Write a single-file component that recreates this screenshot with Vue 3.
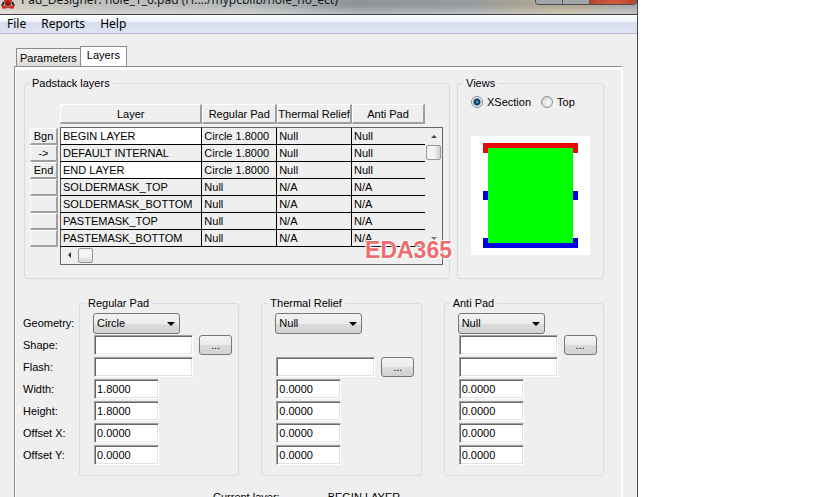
<script setup>
import { ref, reactive } from 'vue'

const columns = ['Layer', 'Regular Pad', 'Thermal Relief', 'Anti Pad']
const layers = [
  { key: 'Bgn', editable: true, cells: ['BEGIN LAYER', 'Circle 1.8000', 'Null', 'Null'] },
  { key: '->', editable: false, cells: ['DEFAULT INTERNAL', 'Circle 1.8000', 'Null', 'Null'] },
  { key: 'End', editable: true, cells: ['END LAYER', 'Circle 1.8000', 'Null', 'Null'] },
  { key: '', editable: false, cells: ['SOLDERMASK_TOP', 'Null', 'N/A', 'N/A'] },
  { key: '', editable: false, cells: ['SOLDERMASK_BOTTOM', 'Null', 'N/A', 'N/A'] },
  { key: '', editable: false, cells: ['PASTEMASK_TOP', 'Null', 'N/A', 'N/A'] },
  { key: '', editable: false, cells: ['PASTEMASK_BOTTOM', 'Null', 'N/A', 'N/A'] }
]

const view = ref('xsection')

const numeric = [
  { id: 'width', label: 'Width:' },
  { id: 'height', label: 'Height:' },
  { id: 'ox', label: 'Offset X:' },
  { id: 'oy', label: 'Offset Y:' }
]

const pads = reactive([
  { id: 'reg', title: 'Regular Pad', geometry: 'Circle', hasShape: true, browse: 'shape', shape: '', flash: '', width: '1.8000', height: '1.8000', ox: '0.0000', oy: '0.0000' },
  { id: 'thermal', title: 'Thermal Relief', geometry: 'Null', hasShape: false, browse: 'flash', shape: '', flash: '', width: '0.0000', height: '0.0000', ox: '0.0000', oy: '0.0000' },
  { id: 'anti', title: 'Anti Pad', geometry: 'Null', hasShape: true, browse: 'shape', shape: '', flash: '', width: '0.0000', height: '0.0000', ox: '0.0000', oy: '0.0000' }
])
</script>

<template>
  <div class="desktop">
    <main class="window">
      <header class="titlebar">
        <svg class="app-icon" width="16" height="16" viewBox="0 0 16 16" aria-hidden="true">
          <path d="M4 9 L2 13 M12 9 L14 13" stroke="#222" stroke-width="2" />
          <ellipse cx="8" cy="7" rx="4" ry="6" fill="#d42a22" />
          <path d="M2 14 H7 M9 14 H14" stroke="#d42a22" stroke-width="3" />
          <path d="M8 8 V15 M5 11 H11" stroke="#3b1512" stroke-width="1" />
        </svg>
        <span class="title">Pad_Designer: hole_1_6.pad (H:.../mypcblib/hole_no_ect)</span>
        <div class="caption">
          <button type="button" class="cap" aria-label="Minimize"></button>
          <button type="button" class="cap" aria-label="Maximize"></button>
          <button type="button" class="cap close" aria-label="Close"></button>
        </div>
      </header>

      <nav class="menubar">
        <button type="button">File</button>
        <button type="button">Reports</button>
        <button type="button">Help</button>
      </nav>

      <div class="tabs" role="tablist">
        <button type="button" role="tab" class="tab" aria-selected="false">Parameters</button>
        <button type="button" role="tab" class="tab active" aria-selected="true">Layers</button>
      </div>

      <section class="panel">
        <div class="upper">
          <fieldset class="group stack">
            <legend>Padstack layers</legend>
            <div class="sheet">
              <div class="row-keys">
                <button v-for="(l, i) in layers" :key="i" type="button" class="key" :aria-label="l.cells[0]">{{ l.key }}</button>
              </div>
              <div class="grid-wrap">
                <div class="grid-main">
                  <table>
                    <colgroup>
                      <col class="c-layer" /><col class="c-reg" /><col class="c-thermal" /><col class="c-anti" />
                    </colgroup>
                    <thead>
                      <tr><th v-for="c in columns" :key="c" scope="col"><div class="head">{{ c }}</div></th></tr>
                    </thead>
                    <tbody>
                      <tr v-for="(l, i) in layers" :key="i" :class="{ editable: l.editable }">
                        <td v-for="(c, j) in l.cells" :key="j">{{ c }}</td>
                      </tr>
                    </tbody>
                  </table>
                  <div class="vscroll">
                    <svg width="16" height="16" viewBox="0 0 16 16"><path d="M5 10 L8 7 L11 10 Z" fill="#444" /></svg>
                    <span class="thumb vertical"></span>
                    <svg class="last" width="16" height="16" viewBox="0 0 16 16"><path d="M5 6 L8 9 L11 6 Z" fill="#777" /></svg>
                  </div>
                </div>
                <div class="hscroll">
                  <svg width="17" height="16" viewBox="0 0 17 16"><path d="M10 5 L7 8 L10 11 Z" fill="#333" /></svg>
                  <span class="thumb"></span>
                  <svg class="last" width="16" height="16" viewBox="0 0 16 16"><path d="M6 5 L9 8 L6 11 Z" fill="#333" /></svg>
                </div>
                <span class="watermark">EDA365</span>
              </div>
            </div>
          </fieldset>

          <fieldset class="group views">
            <legend>Views</legend>
            <div class="radios">
              <label><input v-model="view" type="radio" name="view" value="xsection" />XSection</label>
              <label><input v-model="view" type="radio" name="view" value="top" />Top</label>
            </div>
            <svg class="preview" width="119" height="119" viewBox="0 0 119 119" role="img" aria-label="Pad cross section">
              <rect width="119" height="119" fill="#fff" />
              <rect x="12" y="7" width="95" height="10" fill="#ea0808" />
              <rect x="12" y="55" width="95" height="9" fill="#0000e4" />
              <rect x="12" y="102" width="95" height="10" fill="#0000e4" />
              <rect x="17" y="12" width="85" height="95" fill="#00ff00" />
            </svg>
          </fieldset>
        </div>

        <div class="pads">
          <div class="labels">
            <label for="reg-geometry">Geometry:</label>
            <label for="reg-shape">Shape:</label>
            <label for="reg-flash">Flash:</label>
            <label v-for="n in numeric" :key="n.id" :for="'reg-' + n.id">{{ n.label }}</label>
          </div>
          <fieldset v-for="p in pads" :key="p.id" class="group pad">
            <legend>{{ p.title }}</legend>
            <div class="line">
              <span class="combo">
                <select :id="p.id + '-geometry'" v-model="p.geometry" :aria-label="p.title + ' geometry'">
                  <option>Null</option>
                  <option>Circle</option>
                </select>
                <svg width="9" height="5" viewBox="0 0 9 5"><path d="M0 0 H8 L4 4 Z" fill="#000" /></svg>
              </span>
            </div>
            <div class="line">
              <input v-if="p.hasShape" :id="p.id + '-shape'" v-model="p.shape" class="box wide" type="text" :aria-label="p.title + ' shape'" />
              <button v-if="p.browse === 'shape'" type="button" class="browse">...</button>
            </div>
            <div class="line">
              <input :id="p.id + '-flash'" v-model="p.flash" class="box wide" type="text" :aria-label="p.title + ' flash'" />
              <button v-if="p.browse === 'flash'" type="button" class="browse">...</button>
            </div>
            <div v-for="n in numeric" :key="n.id" class="line">
              <input :id="p.id + '-' + n.id" v-model="p[n.id]" class="box" type="text" :aria-label="p.title + ' ' + n.label" />
            </div>
          </fieldset>
        </div>

        <div class="current">
          <span>Current layer:</span>
          <span>BEGIN LAYER</span>
        </div>
      </section>
    </main>
  </div>
</template>

<style>
body {
  background: #fff;
  overflow: hidden;
}
</style>

<style scoped>
* {
  box-sizing: border-box;
}
.desktop {
  height: 100vh;
  overflow: hidden;
  padding-right: 181px;
  font: 11px/14px "Liberation Sans", Arial, sans-serif;
  color: #000;
}
button,
input,
select {
  font: inherit;
  color: inherit;
  margin: 0;
  padding: 0;
}
svg {
  display: block;
}
.window {
  min-height: 100vh;
  background: #efefef;
  border-right: 1px solid #45484c;
}
.titlebar {
  height: 15px;
  overflow: hidden;
  display: flex;
  align-items: flex-end;
  padding: 0 0 5px 0;
  border-bottom: 1px solid #3c4044;
  background:
    linear-gradient(to bottom, transparent 40%, rgba(255, 255, 255, 0.35)),
    linear-gradient(to right, #d6cfc6, #c0c0bd 15%, #b5b8b9 40%, #8f9497 56%, #989c9f 74%, #b3a98f 87%, #a7a9ab);
}
.app-icon {
  flex: none;
}
.title {
  margin-left: 5px;
  flex: 1;
  white-space: nowrap;
  font: 12px/18px "Noto Sans", sans-serif;
  color: #14181c;
}
.caption {
  align-self: flex-start;
  display: flex;
  height: 5px;
  border: 1px solid #4a4d50;
  border-top: 0;
  border-radius: 0 0 4px 4px;
  overflow: hidden;
}
.cap {
  width: 27px;
  border: 0;
  border-right: 1px solid #5a5d60;
  background: #a3a6a8;
}
.cap.close {
  width: 46px;
  border-right: 0;
  background: linear-gradient(to right, #b8452c, #d4583c 50%, #b8452c);
}
.menubar {
  display: flex;
  height: 19px;
  padding-left: 7px;
  gap: 15px;
  border-bottom: 1px solid #b4bccb;
  background: linear-gradient(to bottom, #fff, #eef1f9 38%, #d7dded 40%, #dde3f3);
}
.menubar button {
  border: 0;
  background: none;
  font: 12px/18px "Noto Sans", sans-serif;
}
.tabs {
  display: flex;
  align-items: flex-end;
  height: 32px;
  padding-left: 16px;
}
.tab {
  height: 18px;
  padding: 0 3px;
  border: 1px solid #8a8c8e;
  border-width: 1px 0 0 1px;
  background: linear-gradient(to bottom, #f3f3f3, #ececec 50%, #d9d9d9);
}
.tab.active {
  height: 20px;
  padding: 0 6px 3px;
  border-right-width: 1px;
  background: #fff;
}
.panel {
  margin: 0 14px;
  padding: 9px 17px 0 9px;
  border-left: 1px solid #8a8c8e;
  border-top: 1px solid #8a8c8e;
  border-right: 2px solid #fff;
  box-shadow: inset 1px 3px 0 #fff;
}
.group {
  margin: 0;
  padding: 0;
  min-width: 0;
  border: 1px solid #d5dde2;
  border-radius: 3px;
}
legend {
  margin-left: -8px;
  padding: 0 3px;
  line-height: 14px;
}
.upper {
  display: flex;
  gap: 7px;
}
.stack {
  flex: 1;
  padding: 14px 6px 13px 5px;
}
.stack legend {
  margin-left: -1px;
}
.sheet {
  display: flex;
  gap: 2px;
}
.row-keys {
  margin-top: 24px;
}
.key {
  display: block;
  width: 28px;
  height: 17px;
  line-height: 14px;
  background: #efefef;
  border: 1px solid #fff;
  border-right: 2px solid #a0a0a0;
  border-bottom: 2px solid #a0a0a0;
}
.grid-wrap {
  flex: 1;
  min-width: 0;
  position: relative;
}
.grid-main {
  display: flex;
}
table {
  flex: 1;
  min-width: 0;
  table-layout: fixed;
  border-collapse: separate;
  border-spacing: 0;
}
.c-layer {
  width: 39%;
}
.c-thermal,
.c-reg {
  width: 20.5%;
}
th {
  padding: 0 0 3px;
  font-weight: normal;
}
.head {
  height: 20px;
  line-height: 18px;
  white-space: nowrap;
  overflow: hidden;
  border: 1px solid #fff;
  border-right: 2px solid #a0a0a0;
  border-bottom: 2px solid #a0a0a0;
}
td {
  height: 17px;
  padding: 0 2px;
  line-height: 16px;
  white-space: nowrap;
  border-right: 1px solid #000;
  border-bottom: 1px solid #000;
}
td:first-child {
  border-left: 1px solid #555;
}
td:last-child {
  border-right: 0;
}
tbody tr:first-child td {
  height: 18px;
  border-top: 1px solid #666;
}
.editable td:first-child {
  background: #fff;
}
.vscroll {
  display: flex;
  flex-direction: column;
  width: 18px;
  margin-top: 23px;
  padding-left: 1px;
  border-top: 1px solid #666;
  border-right: 1px solid #666;
}
.hscroll {
  display: flex;
  height: 18px;
  border: 1px solid #666;
  border-top: 0;
}
.thumb {
  width: 15px;
  height: 15px;
  margin-top: 1px;
  border: 1px solid #989898;
  border-radius: 2px;
  background: linear-gradient(to bottom, #f5f5f5 50%, #d6d6d6);
}
.thumb.vertical {
  background: linear-gradient(to right, #f5f5f5 50%, #d0d0d0);
}
.vscroll .last {
  margin-top: auto;
}
.hscroll .last {
  margin-left: auto;
  margin-right: 17px;
}
.watermark {
  position: absolute;
  right: -9px;
  bottom: 3px;
  font: bold 23px/24px "Liberation Sans", Arial, sans-serif;
  color: rgba(232, 70, 70, 0.8);
  text-shadow: 0 0 2px #fff, 1px 1px 1px #fff, -1px -1px 1px #fff;
}
.views {
  flex: none;
  width: 147px;
  padding: 5px 13px 0;
}
.radios {
  display: flex;
  gap: 10px;
}
.radios label {
  display: flex;
  align-items: center;
  gap: 4px;
}
.radios input {
  appearance: none;
  width: 12px;
  height: 12px;
  border: 1px solid #8a8f94;
  border-radius: 50%;
  background: radial-gradient(circle at 60% 60%, #fff, #d8d8d8 70%);
}
.radios input:checked {
  background: radial-gradient(circle, #6db3dc 0, #16486e 2px, #123a5c 3px, #e8eef2 4px);
}
.preview {
  margin-top: 27px;
}
.pads {
  display: grid;
  grid-template-columns: 33px repeat(3, 1fr);
  column-gap: 22px;
  margin-top: 17px;
}
.labels {
  display: flex;
  flex-direction: column;
  padding-top: 16px;
  margin-left: -1px;
}
.labels label {
  height: 22px;
  line-height: 22px;
  white-space: nowrap;
}
.pad {
  padding: 2px 0 9px 13px;
}
.line {
  display: flex;
  align-items: center;
  gap: 6px;
  height: 22px;
}
.combo {
  position: relative;
}
.combo select {
  display: block;
  appearance: none;
  width: 87px;
  height: 21px;
  padding-left: 3px;
  border: 1px solid #777;
  border-radius: 3px;
  background: linear-gradient(to bottom, #f3f3f3, #ebebeb 50%, #dcdcdc 51%, #d2d2d2);
}
.combo svg {
  position: absolute;
  right: 4px;
  top: 9px;
  pointer-events: none;
}
.box {
  width: 65px;
  height: 20px;
  margin-left: 1px;
  padding: 0 2px 1px;
  border: 1px solid #a0a0a0;
  border-right-color: #fff;
  border-bottom-color: #fff;
  outline: 0;
  background: #fff;
  box-shadow: inset 1px 1px 0 #696969, inset -1px -1px 0 #e3e3e3;
}
.box.wide {
  width: 99px;
}
.browse {
  width: 33px;
  height: 20px;
  border: 1px solid #777;
  border-radius: 3px;
  background: linear-gradient(to bottom, #f3f3f3, #ebebeb 50%, #dcdcdc 51%, #d2d2d2);
}
.current {
  display: flex;
  gap: 48px;
  margin-top: 14px;
  padding-left: 189px;
}
</style>
